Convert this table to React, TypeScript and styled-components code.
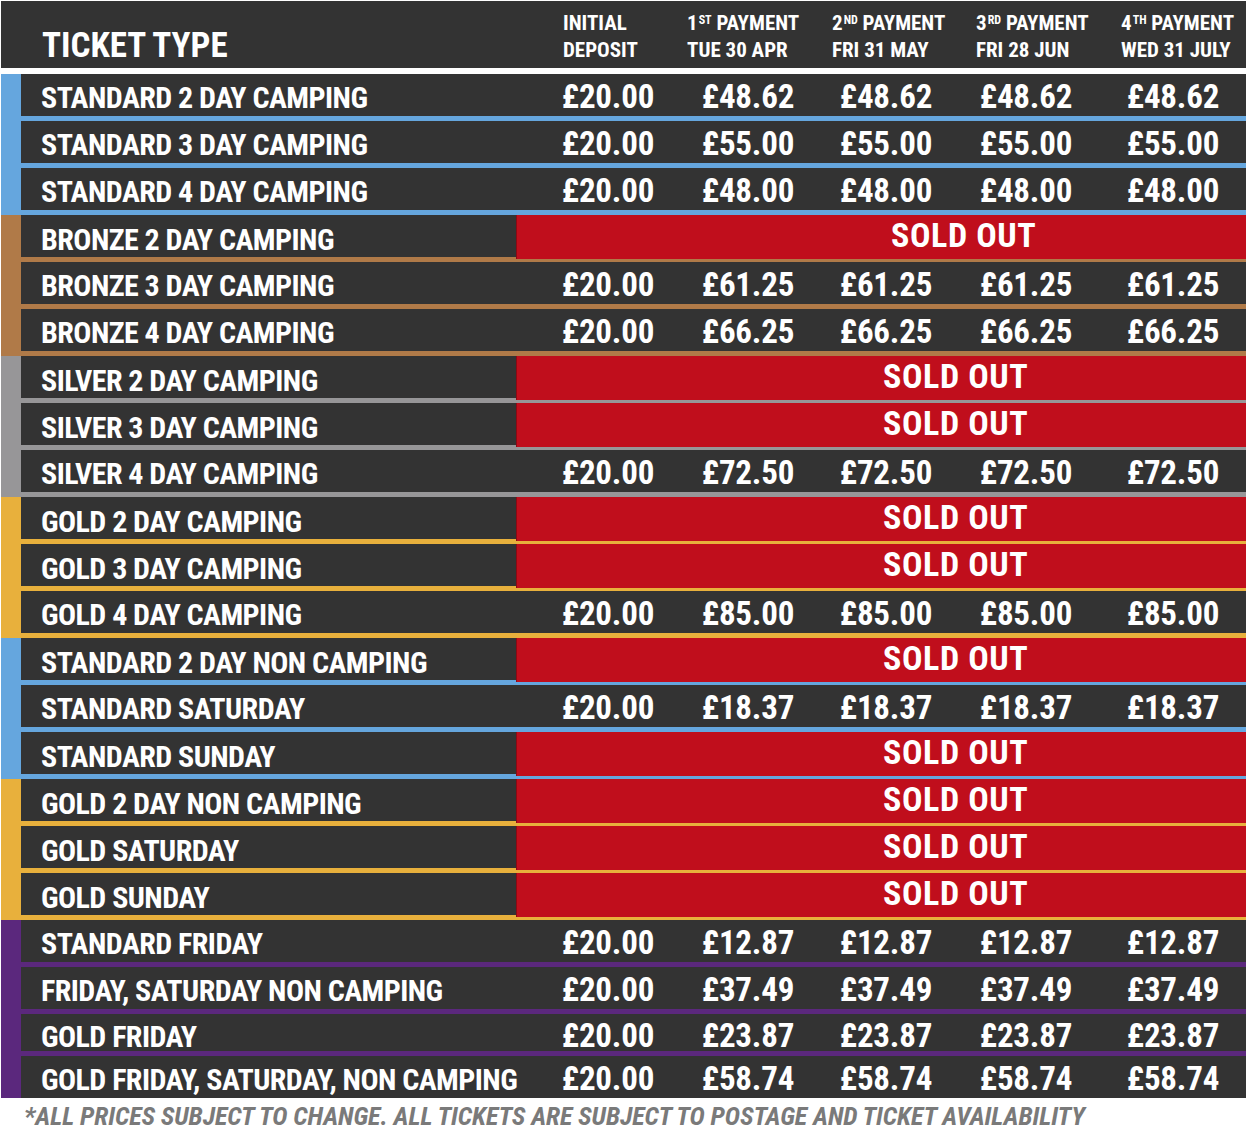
import React from "react";
import styled, { createGlobalStyle } from "styled-components";

const Global = createGlobalStyle`
  html, body { margin: 0; padding: 0; background: #ffffff; }
  body {
    font-family: "Roboto Condensed", "Roboto", "Liberation Sans", sans-serif;
    font-stretch: 75%;
  }
`;

const COLORS = {
  blue: "#65a6de",
  bronze: "#b07a48",
  silver: "#979698",
  gold: "#e8b03c",
  purple: "#5b287d",
};

const DARK = "#333333";
const RED = "#c00e1c";

type Row = {
  label: string;
  prices?: string[];
  soldShift?: number;
  height?: number;
};

type Group = { color: string; rows: Row[] };

const p = (a: string) => ["£20.00", a, a, a, a];

const groups: Group[] = [
  {
    color: COLORS.blue,
    rows: [
      { label: "STANDARD 2 DAY CAMPING", prices: p("£48.62") },
      { label: "STANDARD 3 DAY CAMPING", prices: p("£55.00") },
      { label: "STANDARD 4 DAY CAMPING", prices: p("£48.00") },
    ],
  },
  {
    color: COLORS.bronze,
    rows: [
      { label: "BRONZE 2 DAY CAMPING", soldShift: 8 },
      { label: "BRONZE 3 DAY CAMPING", prices: p("£61.25") },
      { label: "BRONZE 4 DAY CAMPING", prices: p("£66.25") },
    ],
  },
  {
    color: COLORS.silver,
    rows: [
      { label: "SILVER 2 DAY CAMPING" },
      { label: "SILVER 3 DAY CAMPING" },
      { label: "SILVER 4 DAY CAMPING", prices: p("£72.50") },
    ],
  },
  {
    color: COLORS.gold,
    rows: [
      { label: "GOLD 2 DAY CAMPING" },
      { label: "GOLD 3 DAY CAMPING" },
      { label: "GOLD 4 DAY CAMPING", prices: p("£85.00") },
    ],
  },
  {
    color: COLORS.blue,
    rows: [
      { label: "STANDARD 2 DAY NON CAMPING" },
      { label: "STANDARD SATURDAY", prices: p("£18.37") },
      { label: "STANDARD SUNDAY" },
    ],
  },
  {
    color: COLORS.gold,
    rows: [
      { label: "GOLD 2 DAY NON CAMPING" },
      { label: "GOLD SATURDAY" },
      { label: "GOLD SUNDAY" },
    ],
  },
  {
    color: COLORS.purple,
    rows: [
      { label: "STANDARD FRIDAY", prices: p("£12.87") },
      { label: "FRIDAY, SATURDAY NON CAMPING", prices: p("£37.49") },
      { label: "GOLD FRIDAY", prices: p("£23.87"), height: 37 },
      { label: "GOLD FRIDAY, SATURDAY, NON CAMPING", prices: p("£58.74") },
    ],
  },
];

const Page = styled.div`
  width: 1245px;
  padding: 1px 0 0 1px;
  display: flex;
  flex-direction: column;
`;

const Header = styled.div`
  height: 67px;
  background: ${DARK};
  display: grid;
  grid-template-columns: 562px 124px 145px 144px 145px 1fr;
  color: #ffffff;
  font-weight: 700;
`;

const Title = styled.div`
  padding-left: 41px;
  padding-top: 25px;
  font-size: 35px;
  line-height: 40px;
`;

const ColHead = styled.div`
  padding-top: 9px;
  font-size: 21px;
  line-height: 27px;
  white-space: nowrap;
`;

const Sup = styled.sup`
  font-size: 12px;
  vertical-align: top;
  position: relative;
  top: -3px;
  margin-left: 1px;
`;

const Gap = styled.div`
  height: 6px;
`;

const GroupBox = styled.div<{ $color: string; $last: boolean }>`
  background: ${(p) => p.$color};
  padding-left: 20px;
  padding-bottom: ${(p) => (p.$last ? 0 : 5)}px;
  display: flex;
  flex-direction: column;
  gap: 5px;
`;

const RowBox = styled.div<{ $h: number }>`
  height: ${(p) => p.$h}px;
  background: ${DARK};
  display: grid;
  grid-template-columns: 495px 24px 136px 144px 132px 148px 1fr;
  color: #ffffff;
  font-weight: 700;
`;

const Label = styled.div`
  padding-left: 20px;
  font-size: 30px;
  letter-spacing: -0.55px;
  display: flex;
  align-items: center;
  padding-top: 4px;
  white-space: nowrap;
`;

const Price = styled.div`
  font-size: 33px;
  letter-spacing: -0.2px;
  display: flex;
  align-items: center;
  justify-content: center;
  padding-top: 2px;
`;

const Sold = styled.div<{ $shift: number }>`
  grid-column: 2 / -1;
  background: ${RED};
  box-shadow: inset 1px 0 0 #8a0a14;
  display: flex;
  align-items: center;
  font-size: 34px;
  letter-spacing: 0.6px;
  padding-left: ${(p) => 367 + p.$shift}px;
  padding-bottom: 4px;
`;

const Footer = styled.div`
  padding: 5px 0 0 23px;
  font-size: 26px;
  line-height: 26px;
  letter-spacing: -0.1px;
  font-style: italic;
  font-weight: 700;
  color: #7a7a7a;
  white-space: nowrap;
`;

export default function App() {
  return (
    <>
      <Global />
      <Page>
        <Header>
          <Title>TICKET TYPE</Title>
          <ColHead>
            INITIAL
            <br />
            DEPOSIT
          </ColHead>
          <ColHead>
            1<Sup>ST</Sup> PAYMENT
            <br />
            TUE 30 APR
          </ColHead>
          <ColHead>
            2<Sup>ND</Sup> PAYMENT
            <br />
            FRI 31 MAY
          </ColHead>
          <ColHead>
            3<Sup>RD</Sup> PAYMENT
            <br />
            FRI 28 JUN
          </ColHead>
          <ColHead>
            4<Sup>TH</Sup> PAYMENT
            <br />
            WED 31 JULY
          </ColHead>
        </Header>
        <Gap />
        {groups.map((g, gi) => (
          <GroupBox key={gi} $color={g.color} $last={gi === groups.length - 1}>
            {g.rows.map((r, ri) => (
              <RowBox key={ri} $h={r.height ?? 42}>
                <Label>{r.label}</Label>
                {r.prices ? (
                  <>
                    <div />
                    {r.prices.map((pr, pi) => (
                      <Price key={pi}>{pr}</Price>
                    ))}
                  </>
                ) : (
                  <Sold $shift={r.soldShift ?? 0}>SOLD OUT</Sold>
                )}
              </RowBox>
            ))}
          </GroupBox>
        ))}
        <Footer>
          *ALL PRICES SUBJECT TO CHANGE. ALL TICKETS ARE SUBJECT TO POSTAGE AND TICKET AVAILABILITY
        </Footer>
      </Page>
    </>
  );
}
